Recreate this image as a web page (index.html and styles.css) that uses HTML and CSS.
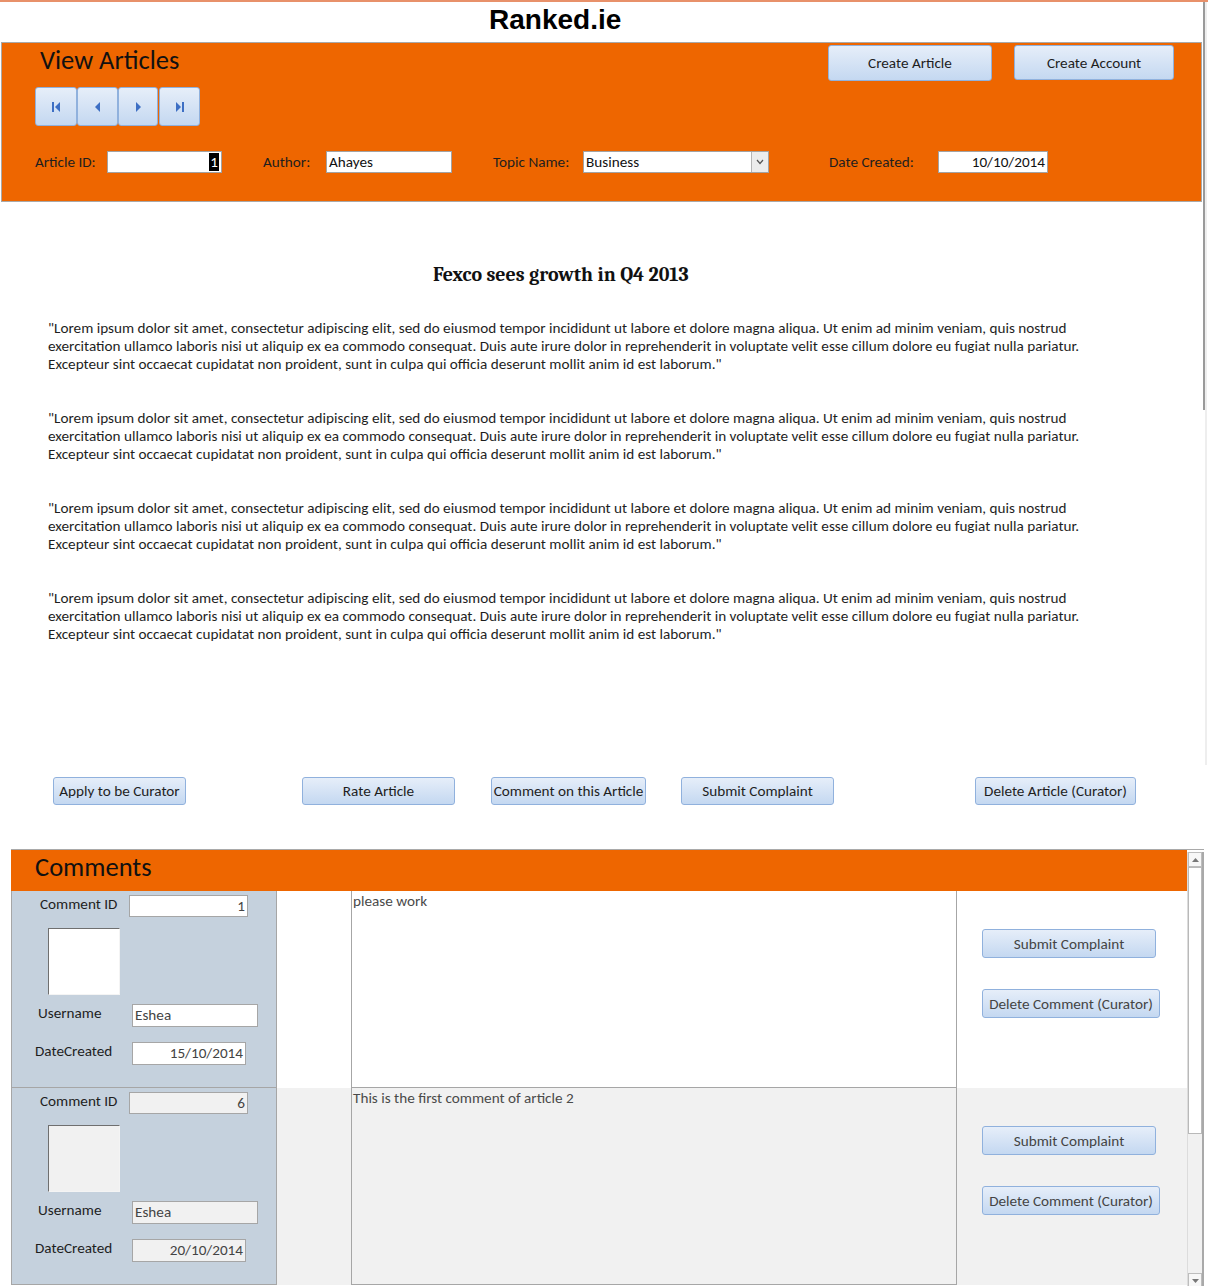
FILE: index.html
```html
<!DOCTYPE html>
<html>
<head>
<meta charset="utf-8">
<link rel="stylesheet" href="styles.css">
</head>
<body>
<div class="form">
  <header class="brand">Ranked.ie</header>
  <section class="panel">
    <div class="panel-top">
      <h1 class="title">View Articles</h1>
      <div class="top-buttons">
        <button class="btn btn-create-article">Create Article</button>
        <button class="btn btn-create-account">Create Account</button>
      </div>
    </div>
    <div class="nav">
      <button class="nav-btn nav-first"><svg width="10" height="12" viewBox="0 0 10 12"><rect x="1" y="1" width="2" height="10" fill="#3d6fc4"/><path d="M9 1 L4 6 L9 11 Z" fill="#3d6fc4"/></svg></button>
      <button class="nav-btn nav-prev"><svg width="10" height="12" viewBox="0 0 10 12"><path d="M7 1 L2 6 L7 11 Z" fill="#3d6fc4"/></svg></button>
      <button class="nav-btn nav-next"><svg width="10" height="12" viewBox="0 0 10 12"><path d="M3 1 L8 6 L3 11 Z" fill="#3d6fc4"/></svg></button>
      <button class="nav-btn nav-last"><svg width="10" height="12" viewBox="0 0 10 12"><path d="M1 1 L6 6 L1 11 Z" fill="#3d6fc4"/><rect x="7" y="1" width="2" height="10" fill="#3d6fc4"/></svg></button>
    </div>
    <div class="fields">
      <label class="lbl lbl-id">Article ID:</label>
      <div class="box box-id num"><span class="sel">1</span></div>
      <label class="lbl lbl-author">Author:</label>
      <div class="box box-author">Ahayes</div>
      <label class="lbl lbl-topic">Topic Name:</label>
      <div class="box box-topic"><span class="combo-text">Business</span><span class="combo-arrow"><svg width="8" height="6" viewBox="0 0 8 6"><path d="M1 1 L4 4.5 L7 1" fill="none" stroke="#555" stroke-width="1.2"/></svg></span></div>
      <label class="lbl lbl-date">Date Created:</label>
      <div class="box box-date num">10/10/2014</div>
    </div>
  </section>

  <article class="article">
    <h2 class="headline">Fexco sees growth in Q4 2013</h2>
    <p class="para">"Lorem ipsum dolor sit amet, consectetur adipiscing elit, sed do eiusmod tempor incididunt ut labore et dolore magna aliqua. Ut enim ad minim veniam, quis nostrud<br>exercitation ullamco laboris nisi ut aliquip ex ea commodo consequat. Duis aute irure dolor in reprehenderit in voluptate velit esse cillum dolore eu fugiat nulla pariatur.<br>Excepteur sint occaecat cupidatat non proident, sunt in culpa qui officia deserunt mollit anim id est laborum."</p>
    <p class="para">"Lorem ipsum dolor sit amet, consectetur adipiscing elit, sed do eiusmod tempor incididunt ut labore et dolore magna aliqua. Ut enim ad minim veniam, quis nostrud<br>exercitation ullamco laboris nisi ut aliquip ex ea commodo consequat. Duis aute irure dolor in reprehenderit in voluptate velit esse cillum dolore eu fugiat nulla pariatur.<br>Excepteur sint occaecat cupidatat non proident, sunt in culpa qui officia deserunt mollit anim id est laborum."</p>
    <p class="para">"Lorem ipsum dolor sit amet, consectetur adipiscing elit, sed do eiusmod tempor incididunt ut labore et dolore magna aliqua. Ut enim ad minim veniam, quis nostrud<br>exercitation ullamco laboris nisi ut aliquip ex ea commodo consequat. Duis aute irure dolor in reprehenderit in voluptate velit esse cillum dolore eu fugiat nulla pariatur.<br>Excepteur sint occaecat cupidatat non proident, sunt in culpa qui officia deserunt mollit anim id est laborum."</p>
    <p class="para">"Lorem ipsum dolor sit amet, consectetur adipiscing elit, sed do eiusmod tempor incididunt ut labore et dolore magna aliqua. Ut enim ad minim veniam, quis nostrud<br>exercitation ullamco laboris nisi ut aliquip ex ea commodo consequat. Duis aute irure dolor in reprehenderit in voluptate velit esse cillum dolore eu fugiat nulla pariatur.<br>Excepteur sint occaecat cupidatat non proident, sunt in culpa qui officia deserunt mollit anim id est laborum."</p>
  </article>

  <div class="actions">
    <button class="btn act act-apply">Apply to be Curator</button>
    <button class="btn act act-rate">Rate Article</button>
    <button class="btn act act-comment">Comment on this Article</button>
    <button class="btn act act-complaint">Submit Complaint</button>
    <button class="btn act act-delete">Delete Article (Curator)</button>
  </div>
</div>

<section class="comments">
  <div class="comments-main">
    <div class="comments-head">Comments</div>

    <div class="crow">
      <div class="cleft">
        <div class="cline c1"><span class="clbl w1">Comment ID</span><div class="cbox cb-id num">1</div></div>
        <div class="avatar"></div>
        <div class="cline c3"><span class="clbl w3">Username</span><div class="cbox cb-user">Eshea</div></div>
        <div class="cline c4"><span class="clbl w4">DateCreated</span><div class="cbox cb-date num">15/10/2014</div></div>
      </div>
      <div class="cgap"></div>
      <div class="ctext">please work</div>
      <div class="cright">
        <button class="btn cbtn cbtn-complaint">Submit Complaint</button>
        <button class="btn cbtn cbtn-delete">Delete Comment (Curator)</button>
      </div>
    </div>

    <div class="crow alt">
      <div class="cleft">
        <div class="cline c1"><span class="clbl w1">Comment ID</span><div class="cbox cb-id num">6</div></div>
        <div class="avatar"></div>
        <div class="cline c3"><span class="clbl w3">Username</span><div class="cbox cb-user">Eshea</div></div>
        <div class="cline c4"><span class="clbl w4">DateCreated</span><div class="cbox cb-date num">20/10/2014</div></div>
      </div>
      <div class="cgap"></div>
      <div class="ctext">This is the first comment of article 2</div>
      <div class="cright">
        <button class="btn cbtn cbtn-complaint">Submit Complaint</button>
        <button class="btn cbtn cbtn-delete">Delete Comment (Curator)</button>
      </div>
    </div>
  </div>
  <div class="vscroll">
    <div class="sb-arrow sb-up"><svg width="7" height="4" viewBox="0 0 7 4"><path d="M0 4 L3.5 0 L7 4 Z" fill="#777"/></svg></div>
    <div class="sb-thumb"></div>
    <div class="sb-track"></div>
    <div class="sb-arrow sb-down"><svg width="7" height="4" viewBox="0 0 7 4"><path d="M0 0 L3.5 4 L7 0 Z" fill="#777"/></svg></div>
  </div>
</section>
</body>
</html>
```
FILE: styles.css
```css
* { box-sizing: border-box; }
html, body { margin: 0; padding: 0; background: #fff; }
body {
  width: 1208px;
  height: 1286px;
  overflow: hidden;
  font-family: Carlito, Lato, "Open Sans", sans-serif;
  font-size: 15.2px;
  color: #1e1e1e;
  border-top: 2px solid #e8916a;
}

.form {
  width: 1207px;
  height: 763px;
  border-right: 2px solid #eeeeee;
  background: linear-gradient(#9a9a9a, #9a9a9a) right top / 2px 408px no-repeat;
}

.brand {
  height: 40px;
  padding-left: 489px;
  font-family: "Liberation Sans", Arial, sans-serif;
  font-weight: bold;
  font-size: 28px;
  line-height: 35px;
  color: #000;
}

.panel {
  margin-left: 1px;
  width: 1201px;
  height: 160px;
  background: #ee6600;
  border: 1px solid #a9a9a9;
}

.panel-top {
  display: flex;
  height: 44px;
}
.title {
  margin: 0 0 0 38px;
  font-weight: normal;
  font-size: 26.5px;
  line-height: 34px;
  color: #111;
}
.top-buttons {
  margin-left: auto;
  margin-right: 27px;
  padding-top: 2px;
  display: flex;
  align-items: flex-start;
  gap: 22px;
}

.btn {
  font-family: inherit;
  font-size: 15.2px;
  color: #1e1e1e;
  background: linear-gradient(#e6eef9, #c4d8f1);
  border: 1px solid #90b1dd;
  border-radius: 3px;
  padding: 0;
  margin: 0;
  cursor: default;
  white-space: nowrap;
}
.btn-create-article { width: 164px; height: 36px; }
.btn-create-account { width: 160px; height: 35px; }

.nav {
  display: flex;
  margin-left: 33px;
  height: 39px;
}
.nav-btn {
  height: 39px;
  padding: 0;
  background: linear-gradient(#e6eef9, #c4d8f1);
  border: 1px solid #90b1dd;
  border-radius: 3px;
  display: flex;
  align-items: center;
  justify-content: center;
}
.nav-first { width: 42px; }
.nav-prev { width: 41px; }
.nav-next { width: 40px; }
.nav-last { width: 41px; margin-left: 1px; }

.fields {
  display: flex;
  align-items: center;
  margin-top: 25px;
  height: 22px;
}
.lbl { color: #1e1e1e; font-size: 15.2px; white-space: nowrap; }
.box {
  height: 22px;
  background: #fff;
  border: 1px solid #a3a3a3;
  font-size: 15.2px;
  line-height: 20px;
  padding: 0 2px;
  color: #111;
  white-space: nowrap;
}
.num { text-align: right; }
.sel { background: #000; color: #fff; padding: 0 1px; }
.lbl-id { margin-left: 33px; width: 72px; }
.box-id { width: 115px; }
.lbl-author { margin-left: 41px; width: 63px; }
.box-author { width: 126px; }
.lbl-topic { margin-left: 41px; width: 90px; }
.box-topic { width: 186px; display: flex; padding-right: 0; }
.combo-text { flex: 1; }
.combo-arrow {
  width: 17px;
  height: 20px;
  background: #ececec;
  border-left: 1px solid #b5b5b5;
  display: flex;
  align-items: center;
  justify-content: center;
}
.lbl-date { margin-left: 60px; width: 109px; }
.box-date { width: 110px; }

.article {
  height: 562px;
  padding-top: 62px;
}
.headline {
  margin: 0 0 33px 0;
  padding-left: 433px;
  font-family: Cambria, "Liberation Serif", "DejaVu Serif", serif;
  font-weight: bold;
  font-size: 20px;
  line-height: 22px;
  color: #111;
}
.para {
  margin: 0 0 36px 48px;
  font-size: 15.2px;
  line-height: 18px;
  white-space: nowrap;
  color: #1e1e1e;
}

.actions {
  display: flex;
  align-items: flex-start;
  padding-top: 13px;
}
.act { height: 28px; }
.act-apply { margin-left: 53px; width: 133px; }
.act-rate { margin-left: 116px; width: 153px; }
.act-comment { margin-left: 36px; width: 155px; }
.act-complaint { margin-left: 35px; width: 153px; }
.act-delete { margin-left: 141px; width: 161px; }

.comments {
  margin-top: 84px;
  margin-left: 11px;
  width: 1193px;
  display: flex;
  border-top: 1px solid #a9a9a9;
}
.comments-main { width: 1176px; }
.comments-head {
  height: 41px;
  background: #ee6600;
  padding-left: 24px;
  font-size: 26.5px;
  line-height: 34px;
  color: #111;
}

.crow {
  display: flex;
  height: 197px;
  background: #fff;
}
.crow.alt { background: #f1f1f1; }
.cleft {
  width: 266px;
  background: #c5d1dd;
  border-left: 1px solid #a6a6a6;
  border-right: 1px solid #a6a6a6;
  border-bottom: 1px solid #a6a6a6;
  padding-top: 4px;
}
.cgap { width: 74px; }
.ctext {
  width: 606px;
  border-left: 1px solid #a6a6a6;
  border-right: 1px solid #a6a6a6;
  border-bottom: 1px solid #a6a6a6;
  padding: 1px 0 0 1px;
  color: #4a4a4a;
  font-size: 15.2px;
  line-height: 18px;
}
.cright {
  width: 230px;
  padding-top: 38px;
  padding-left: 25px;
  display: flex;
  flex-direction: column;
  align-items: flex-start;
  gap: 31px;
}
.cbtn { height: 29px; color: #444; }
.cbtn-complaint { width: 174px; }
.cbtn-delete { width: 178px; }

.cline { display: flex; align-items: flex-start; }
.clbl { color: #1e1e1e; font-size: 15.2px; line-height: 18px; white-space: nowrap; }
.cbox {
  background: #fff;
  border: 1px solid #a6a6a6;
  height: 22px;
  line-height: 20px;
  padding: 0 2px;
  color: #444;
  font-size: 15.2px;
}
.alt .cbox { background: #f1f1f1; }
.c1 { padding-left: 28px; }
.w1 { width: 89px; }
.cb-id { width: 119px; }
.avatar {
  margin: 11px 0 0 36px;
  width: 72px;
  height: 67px;
  background: #fff;
  border: 1px solid;
  border-color: #6f6f6f #f4f4f4 #f4f4f4 #6f6f6f;
}
.alt .avatar { background: #f1f1f1; }
.c3 { padding-left: 26px; margin-top: 9px; }
.w3 { width: 94px; }
.cb-user { width: 126px; height: 23px; }
.c4 { padding-left: 23px; margin-top: 15px; }
.w4 { width: 97px; }
.cb-date { width: 114px; height: 23px; }

.vscroll {
  width: 17px;
  height: 436px;
  margin-top: 2px;
  display: flex;
  flex-direction: column;
  border-left: 1px solid #dcdcdc;
  border-right: 2px solid #a9a9a9;
  background: #f1f1f1;
}
.sb-arrow {
  height: 15px;
  border: 1px solid #bdbdbd;
  background: #f7f7f7;
  display: flex;
  align-items: center;
  justify-content: center;
}
.sb-thumb {
  height: 267px;
  background: #fff;
  border: 1px solid #b9b9b9;
}
.sb-track { flex: 1; }
```
